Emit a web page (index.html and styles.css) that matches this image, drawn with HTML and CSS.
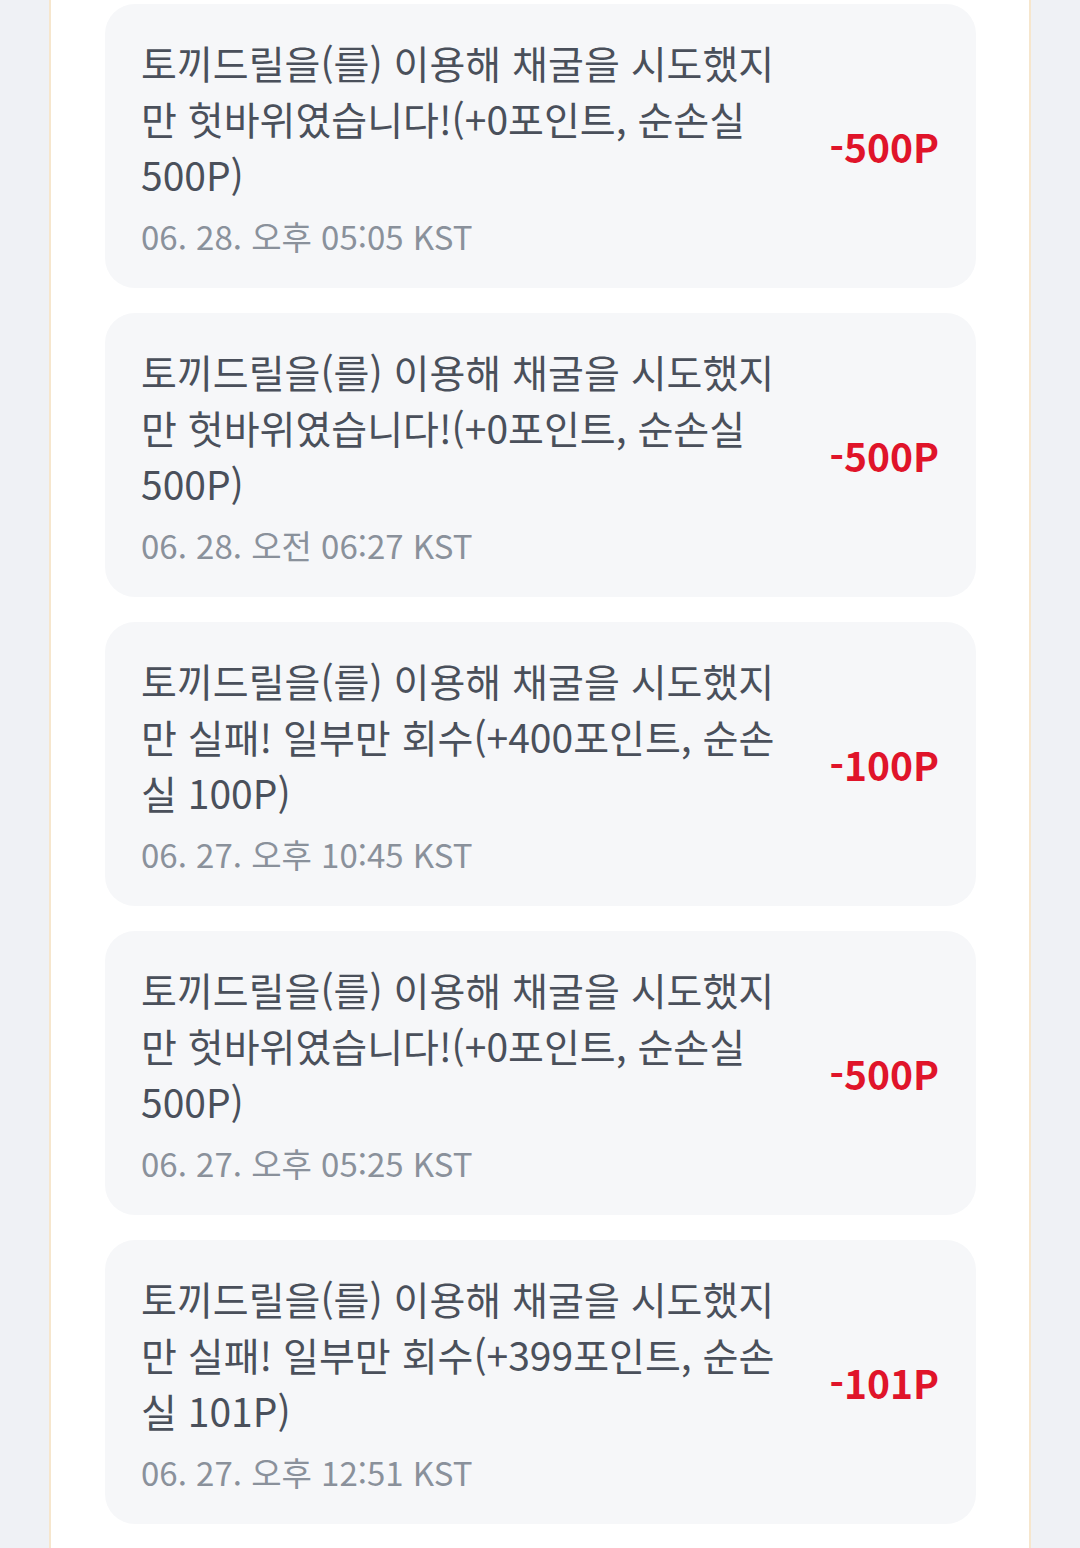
FILE: index.html
```html
<!DOCTYPE html>
<html lang="ko">
<head>
  <meta charset="UTF-8">
  <title>포인트 내역</title>
  <link rel="stylesheet" href="styles.css">
</head>
<body>
  <div class="panel">
    <div class="history">
      <div class="item">
        <div class="info">
          <div class="desc">토끼드릴을(를) 이용해 채굴을 시도했지만 헛바위였습니다!(+0포인트, 순손실 500P)</div>
          <div class="date">06. 28. 오후 05:05 KST</div>
        </div>
        <div class="amount">-500P</div>
      </div>

      <div class="item">
        <div class="info">
          <div class="desc">토끼드릴을(를) 이용해 채굴을 시도했지만 헛바위였습니다!(+0포인트, 순손실 500P)</div>
          <div class="date">06. 28. 오전 06:27 KST</div>
        </div>
        <div class="amount">-500P</div>
      </div>

      <div class="item">
        <div class="info">
          <div class="desc">토끼드릴을(를) 이용해 채굴을 시도했지만 실패! 일부만 회수(+400포인트, 순손실 100P)</div>
          <div class="date">06. 27. 오후 10:45 KST</div>
        </div>
        <div class="amount">-100P</div>
      </div>

      <div class="item">
        <div class="info">
          <div class="desc">토끼드릴을(를) 이용해 채굴을 시도했지만 헛바위였습니다!(+0포인트, 순손실 500P)</div>
          <div class="date">06. 27. 오후 05:25 KST</div>
        </div>
        <div class="amount">-500P</div>
      </div>

      <div class="item">
        <div class="info">
          <div class="desc">토끼드릴을(를) 이용해 채굴을 시도했지만 실패! 일부만 회수(+399포인트, 순손실 101P)</div>
          <div class="date">06. 27. 오후 12:51 KST</div>
        </div>
        <div class="amount">-101P</div>
      </div>
    </div>
  </div>
</body>
</html>
```

FILE: styles.css
```css
html, body {
  height: 100%;
}

body {
  margin: 0;
  font-family: "Noto Sans CJK KR", "Noto Sans", sans-serif;
  background: #eff1f5;
  overflow: hidden;
}

.panel {
  margin: 0 49px;
  min-height: 100%;
  background: #fff;
  border-left: 2px solid #f6e6cd;
  border-right: 2px solid #f6e6cd;
  padding: 4px 53px 0 54px;
  box-sizing: border-box;
}

.history {
  display: flex;
  flex-direction: column;
  gap: 25px;
}

.item {
  display: flex;
  align-items: center;
  gap: 39px;
  background: #f6f7f9;
  border-radius: 30px;
  padding: 30px 37px 30px 36px;
}

.info {
  flex: 1;
  min-width: 0;
}

.desc {
  font-size: 39px;
  line-height: 56px;
  color: #4a505b;
}

.date {
  margin-top: 12px;
  font-size: 33px;
  line-height: 44px;
  color: #8a919b;
}

.amount {
  font-size: 39px;
  font-weight: bold;
  color: #e0142a;
  white-space: nowrap;
}
```
